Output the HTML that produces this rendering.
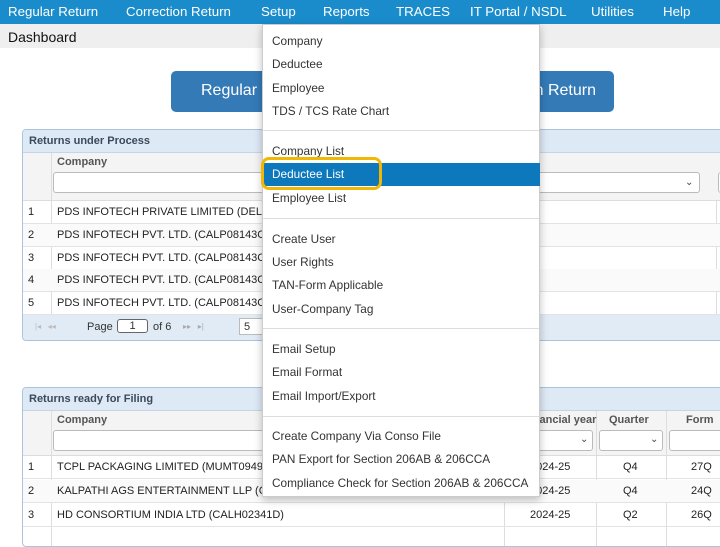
<!DOCTYPE html>
<html><head><style>
*{box-sizing:border-box;margin:0;padding:0}
body{width:720px;height:533px;overflow:hidden;background:#fff;font-family:"Liberation Sans",Arial,sans-serif;position:relative}
.a{position:absolute}
.nav{left:0;top:0;width:720px;height:24px;background:#1a8ccb}
.nav span{position:absolute;top:4px;color:#fff;font-size:13.3px}
.dash{left:0;top:24px;width:720px;height:24px;background:#efefef;font-size:14px;padding:5px 8px;color:#111}
.btn{background:#337ab7;border-radius:5px;color:#fff;font-size:16px}
.panel{border:1px solid #aac4dc;border-radius:4px;background:#fff;overflow:hidden}
.ph{background:#dde9f5;font-size:11px;font-weight:bold;color:#3a4a5c;padding:5px 6px;border-bottom:1px solid #c5d5e5;height:23px}
.row{position:absolute;left:0;height:23px;border-bottom:1px solid #e3e3e3;font-size:11px;color:#222;width:100%}
.row .n{position:absolute;left:5px;top:5px}
.row .c{position:absolute;left:34px;top:5px;white-space:nowrap}
.inp{position:absolute;background:#fff;border:1px solid #bbb;border-radius:3px;height:21px}
.menu{left:262px;top:24px;width:278px;height:473px;background:#fff;border:1px solid #ccc;box-shadow:0 3px 8px rgba(0,0,0,.25)}
.menu div{position:absolute;left:9px;font-size:11.8px;color:#333;white-space:nowrap}
.sep{position:absolute;left:0;width:276px;height:1px;background:#ddd}
.chev{position:absolute;font-size:10px;color:#444}
</style></head><body>
<div class="a nav">
<span style="left:8px">Regular Return</span><span style="left:126px">Correction Return</span><span style="left:261px">Setup</span><span style="left:323px">Reports</span><span style="left:396px">TRACES</span><span style="left:470px">IT Portal / NSDL</span><span style="left:591px">Utilities</span><span style="left:663px">Help</span>
</div>
<div class="a dash">Dashboard</div>
<div class="a btn" style="left:171px;top:71px;width:200px;height:41px;padding:11px 30px">Regular Return</div>
<div class="a btn" style="left:414px;top:71px;width:200px;height:41px;padding:11px 0 0 0;text-align:right;padding-right:18px">Correction Return</div>

<div class="a panel" style="left:22px;top:129px;width:710px;height:212px">
<div class="ph">Returns under Process</div>
<div class="a" style="left:0;top:23px;width:100%;height:48px;background:#f4f4f4;border-bottom:1px solid #ddd"></div>
<div class="a" style="left:28px;top:23px;width:1px;height:163px;background:#ddd"></div>
<div class="a" style="left:34px;top:26px;font-size:11px;font-weight:bold;color:#555">Company</div>
<div class="inp" style="left:30px;top:42px;width:647px"></div>
<span class="chev" style="left:662px;top:47px">&#8964;</span>
<div class="inp" style="left:695px;top:42px;width:20px"></div>
<div class="a" style="left:693px;top:71px;width:1px;height:115px;background:#ddd"></div>
<div class="row" style="top:71px"><span class="n">1</span><span class="c">PDS INFOTECH PRIVATE LIMITED (DELS</span></div>
<div class="row" style="top:94px;background:#fafafa"><span class="n">2</span><span class="c">PDS INFOTECH PVT. LTD. (CALP08143C)</span></div>
<div class="row" style="top:117px"><span class="n">3</span><span class="c">PDS INFOTECH PVT. LTD. (CALP08143C)</span></div>
<div class="row" style="top:139px;background:#fafafa"><span class="n">4</span><span class="c">PDS INFOTECH PVT. LTD. (CALP08143C)</span></div>
<div class="row" style="top:162px"><span class="n">5</span><span class="c">PDS INFOTECH PVT. LTD. (CALP08143C)</span></div>
<div class="a" style="left:0;top:185px;width:100%;height:27px;background:#e1ebf5;font-size:11px;color:#333">
<span class="a" style="left:12px;top:7px;color:#bbb;font-size:8px">|◂ &nbsp; ◂◂</span>
<span class="a" style="left:64px;top:6px">Page</span>
<span class="a" style="left:94px;top:4px;width:31px;height:14px;border:1px solid #666;border-radius:3px;background:#fff;text-align:center;font-size:11px">1</span>
<span class="a" style="left:130px;top:6px">of 6</span>
<span class="a" style="left:160px;top:7px;color:#aaa;font-size:8px">▸▸ &nbsp; ▸|</span>
<span class="a" style="left:216px;top:3px;width:30px;height:17px;border:1px solid #bbb;background:#fff;padding:2px 4px">5</span>
</div>
</div>

<div class="a panel" style="left:22px;top:387px;width:710px;height:160px">
<div class="ph">Returns ready for Filing</div>
<div class="a" style="left:0;top:23px;width:100%;height:45px;background:#f4f4f4;border-bottom:1px solid #ddd"></div>
<div class="a" style="left:28px;top:23px;width:1px;height:140px;background:#ddd"></div>
<div class="a" style="left:481px;top:23px;width:1px;height:140px;background:#ddd"></div>
<div class="a" style="left:573px;top:23px;width:1px;height:140px;background:#ddd"></div>
<div class="a" style="left:643px;top:23px;width:1px;height:140px;background:#ddd"></div>
<div class="a" style="left:34px;top:26px;font-size:11px;font-weight:bold;color:#555">Company</div>
<div class="a" style="left:500px;top:26px;font-size:11px;font-weight:bold;color:#555">Financial year</div>
<div class="a" style="left:586px;top:26px;font-size:11px;font-weight:bold;color:#555">Quarter</div>
<div class="a" style="left:663px;top:26px;font-size:11px;font-weight:bold;color:#555">Form</div>
<div class="inp" style="left:30px;top:42px;width:446px"></div>
<div class="inp" style="left:484px;top:42px;width:86px"></div><span class="chev" style="left:557px;top:46px">&#8964;</span>
<div class="inp" style="left:576px;top:42px;width:64px"></div><span class="chev" style="left:627px;top:46px">&#8964;</span>
<div class="inp" style="left:646px;top:42px;width:60px"></div>
<div class="row" style="top:68px"><span class="n">1</span><span class="c">TCPL PACKAGING LIMITED (MUMT09495</span><span class="a" style="left:507px;top:5px">2024-25</span><span class="a" style="left:600px;top:5px">Q4</span><span class="a" style="left:668px;top:5px">27Q</span></div>
<div class="row" style="top:92px;background:#fafafa"><span class="n">2</span><span class="c">KALPATHI AGS ENTERTAINMENT LLP (C</span><span class="a" style="left:507px;top:5px">2024-25</span><span class="a" style="left:600px;top:5px">Q4</span><span class="a" style="left:668px;top:5px">24Q</span></div>
<div class="row" style="top:116px"><span class="n">3</span><span class="c">HD CONSORTIUM INDIA LTD (CALH02341D)</span><span class="a" style="left:507px;top:5px">2024-25</span><span class="a" style="left:600px;top:5px">Q2</span><span class="a" style="left:668px;top:5px">26Q</span></div>
</div>

<div class="a menu">
<div style="top:9px">Company</div>
<div style="top:32px">Deductee</div>
<div style="top:56px">Employee</div>
<div style="top:79px">TDS / TCS Rate Chart</div>
<span class="sep" style="top:105px"></span>
<div style="top:119px">Company List</div>
<span class="a" style="left:0;top:138px;width:277px;height:23px;background:#0e78bd"></span>
<div style="top:142px;color:#fff">Deductee List</div>
<div style="top:166px">Employee List</div>
<span class="sep" style="top:193px"></span>
<div style="top:207px">Create User</div>
<div style="top:230px">User Rights</div>
<div style="top:253px">TAN-Form Applicable</div>
<div style="top:277px">User-Company Tag</div>
<span class="sep" style="top:303px"></span>
<div style="top:317px">Email Setup</div>
<div style="top:340px">Email Format</div>
<div style="top:364px">Email Import/Export</div>
<span class="sep" style="top:391px"></span>
<div style="top:404px">Create Company Via Conso File</div>
<div style="top:427px">PAN Export for Section 206AB &amp; 206CCA</div>
<div style="top:451px">Compliance Check for Section 206AB &amp; 206CCA</div>
</div>
<div class="a" style="left:261px;top:157px;width:121px;height:33px;border:3px solid #f2b705;border-radius:8px"></div>
</body></html>
